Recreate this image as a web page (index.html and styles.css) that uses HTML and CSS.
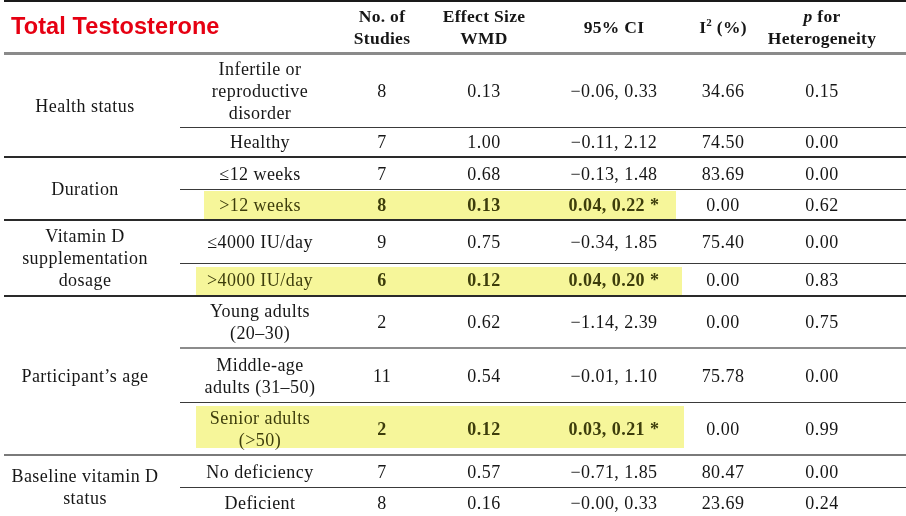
FILE: index.html
```html
<!DOCTYPE html>
<html lang="en">
<head>
<meta charset="utf-8">
<title>Total Testosterone</title>
<link rel="stylesheet" href="styles.css">
</head>
<body>
<table class="tbl">
  <colgroup>
    <col class="c1"><col class="c2"><col class="c3"><col class="c4"><col class="c5"><col class="c6"><col class="c7">
  </colgroup>
  <thead>
    <tr class="head">
      <th colspan="2" class="title">Total Testosterone</th>
      <th>No. of<br>Studies</th>
      <th>Effect Size<br>WMD</th>
      <th>95% CI</th>
      <th>I<sup>2</sup> (%)</th>
      <th class="pcol"><i>p</i> for<br>Heterogeneity</th>
    </tr>
  </thead>
  <tbody>
    <tr class="r1">
      <td rowspan="2" class="grp full">Health status</td>
      <td class="part">Infertile or<br>reproductive<br>disorder</td>
      <td class="part">8</td><td class="part">0.13</td><td class="part">−0.06, 0.33</td><td class="part">34.66</td><td class="part pcol">0.15</td>
    </tr>
    <tr class="r2">
      <td class="full">Healthy</td>
      <td class="full">7</td><td class="full">1.00</td><td class="full">−0.11, 2.12</td><td class="full">74.50</td><td class="full pcol">0.00</td>
    </tr>
    <tr class="r3">
      <td rowspan="2" class="grp full">Duration</td>
      <td class="part">≤12 weeks</td>
      <td class="part">7</td><td class="part">0.68</td><td class="part">−0.13, 1.48</td><td class="part">83.69</td><td class="part pcol">0.00</td>
    </tr>
    <tr class="r4">
      <td class="full hlcell hl"><span class="mark m1"></span>&gt;12 weeks</td>
      <td class="full hl b">8</td><td class="full hl b">0.13</td><td class="full hl b">0.04, 0.22 *</td><td class="full">0.00</td><td class="full pcol">0.62</td>
    </tr>
    <tr class="r5">
      <td rowspan="2" class="grp full">Vitamin D<br>supplementation<br>dosage</td>
      <td class="part">≤4000 IU/day</td>
      <td class="part">9</td><td class="part">0.75</td><td class="part">−0.34, 1.85</td><td class="part">75.40</td><td class="part pcol">0.00</td>
    </tr>
    <tr class="r6">
      <td class="full hlcell hl"><span class="mark m2"></span>&gt;4000 IU/day</td>
      <td class="full hl b">6</td><td class="full hl b">0.12</td><td class="full hl b">0.04, 0.20 *</td><td class="full">0.00</td><td class="full pcol">0.83</td>
    </tr>
    <tr class="r7">
      <td rowspan="3" class="grp fullgray">Participant’s age</td>
      <td class="partgray">Young adults<br>(20–30)</td>
      <td class="partgray">2</td><td class="partgray">0.62</td><td class="partgray">−1.14, 2.39</td><td class="partgray">0.00</td><td class="partgray pcol">0.75</td>
    </tr>
    <tr class="r8">
      <td class="part">Middle-age<br>adults (31–50)</td>
      <td class="part">11</td><td class="part">0.54</td><td class="part">−0.01, 1.10</td><td class="part">75.78</td><td class="part pcol">0.00</td>
    </tr>
    <tr class="r9">
      <td class="fullgray hlcell hl"><span class="mark m3"></span>Senior adults<br>(&gt;50)</td>
      <td class="fullgray hl b">2</td><td class="fullgray hl b">0.12</td><td class="fullgray hl b">0.03, 0.21 *</td><td class="fullgray">0.00</td><td class="fullgray pcol">0.99</td>
    </tr>
    <tr class="r10">
      <td rowspan="2" class="grp">Baseline vitamin D<br>status</td>
      <td class="part">No deficiency</td>
      <td class="part">7</td><td class="part">0.57</td><td class="part">−0.71, 1.85</td><td class="part">80.47</td><td class="part pcol">0.00</td>
    </tr>
    <tr class="r11">
      <td>Deficient</td>
      <td>8</td><td>0.16</td><td>−0.00, 0.33</td><td>23.69</td><td class="pcol">0.24</td>
    </tr>
  </tbody>
</table>
</body>
</html>
```
FILE: styles.css
```css
html, body {
  margin: 0;
  padding: 0;
  background: #ffffff;
  overflow: hidden;
}

body {
  width: 906px;
  height: 516px;
  font-family: "Liberation Serif", "Times New Roman", serif;
  color: #161616;
}

.tbl {
  margin-left: 4px;
  width: 902px;
  border-collapse: collapse;
  table-layout: fixed;
  font-size: 18px;
  letter-spacing: 0.45px;
  line-height: 22px;
}

.c1 { width: 176px; }
.c2 { width: 160px; }
.c3 { width: 84px; }
.c4 { width: 120px; }
.c5 { width: 140px; }
.c6 { width: 78px; }
.c7 { width: 144px; }

.tbl th,
.tbl td {
  padding: 0;
  text-align: center;
  vertical-align: middle;
}

.head th {
  border-top: 2px solid #1a1a1a;
  border-bottom: 3px solid #8a8a8a;
  height: 48px;
  font-weight: bold;
  font-size: 17.5px;
  line-height: 22px;
  letter-spacing: 0.3px;
  padding-top: 0;
}

.head th sup {
  font-size: 11px;
  line-height: 0;
  vertical-align: 7px;
}

.head .title {
  text-align: left;
  padding-left: 7px;
  font-family: "Liberation Sans", Arial, sans-serif;
  font-size: 23.5px;
  color: #e60012;
  letter-spacing: 0.1px;
  padding-bottom: 2px;
}

.pcol {
  padding-right: 24px !important;
}

.grp {
  padding-right: 14px !important;
}

.part { border-bottom: 1px solid #3a3a3a; }
.partgray { border-bottom: 2px solid #8c8c8c; }
.full { border-bottom: 2px solid #2a2a2a; }
.fullgray { border-bottom: 2px solid #7a7a7a; }

.r1 td { height: 72px; }
.r2 td { height: 28px; }
.r3 td { height: 31px; }
.r4 td { height: 29px; }
.r5 td { height: 42px; }
.r6 td { height: 31px; }
.r7 td { height: 50px; }
.r8 td { height: 53px; }
.r9 td { height: 51px; }
.r10 td { height: 31px; }
.r11 td { height: 30px; }

.hl { color: #3f3f12; }
.b { font-weight: bold; }

.hlcell { position: relative; }

.mark {
  position: absolute;
  background: #f6f69a;
  mix-blend-mode: multiply;
  pointer-events: none;
}

.m1 { left: 24px; width: 472px; top: 1px; bottom: 0; }
.m2 { left: 16px; width: 486px; top: 3px; bottom: 0; }
.m3 { left: 16px; width: 488px; top: 3px; bottom: 6px; }
```
